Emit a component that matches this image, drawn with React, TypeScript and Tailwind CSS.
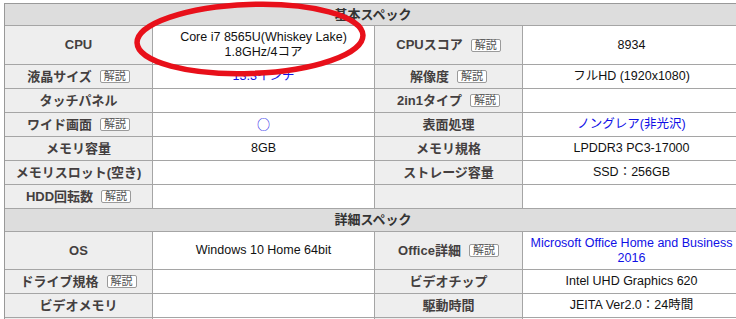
import { ReactNode } from "react";

type Cell = { label?: string; kaisetsu?: boolean; value?: ReactNode; blue?: boolean };
type Row = { h: string; left: Cell; right: Cell };

const basic: Row[] = [
    { h: "h-[39px]", left: { label: "CPU", value: <>Core i7 8565U(Whiskey Lake)<br />1.8GHz/4コア</> }, right: { label: "CPUスコア", kaisetsu: true, value: "8934" } },
    { h: "h-[24px]", left: { label: "液晶サイズ", kaisetsu: true, value: "13.3インチ", blue: true }, right: { label: "解像度", kaisetsu: true, value: "フルHD (1920x1080)" } },
    { h: "h-[24px]", left: { label: "タッチパネル" }, right: { label: "2in1タイプ", kaisetsu: true } },
    { h: "h-[24px]", left: { label: "ワイド画面", kaisetsu: true, value: <span className="font-['Noto_Sans_CJK_JP',sans-serif] text-[13px]">○</span>, blue: true }, right: { label: "表面処理", value: "ノングレア(非光沢)", blue: true } },
    { h: "h-[24px]", left: { label: "メモリ容量", value: "8GB" }, right: { label: "メモリ規格", value: "LPDDR3 PC3-17000" } },
    { h: "h-[24px]", left: { label: "メモリスロット(空き)" }, right: { label: "ストレージ容量", value: "SSD：256GB" } },
    { h: "h-[24px]", left: { label: "HDD回転数", kaisetsu: true }, right: {} },
];

const detail: Row[] = [
    { h: "h-[38px]", left: { label: "OS", value: "Windows 10 Home 64bit" }, right: { label: "Office詳細", kaisetsu: true, value: "Microsoft Office Home and Business 2016", blue: true } },
    { h: "h-[24px]", left: { label: "ドライブ規格", kaisetsu: true }, right: { label: "ビデオチップ", value: "Intel UHD Graphics 620" } },
    { h: "h-[24px]", left: { label: "ビデオメモリ" }, right: { label: "駆動時間", value: "JEITA Ver2.0：24時間" } },
    { h: "h-[24px]", left: {}, right: {} },
];

function Kaisetsu() {
    return (
        <span className="ml-[8px] inline-flex items-center justify-center h-[13px] px-[3px] border border-[#9a9a9a] rounded-[2px] bg-white text-[11px] leading-none font-normal text-[#555]">解説</span>
    )
}

function Label({ cell, w }: { cell: Cell; w: string }) {
    return (
        <div className={`${w} shrink-0 h-full border-r border-[#a5a5a5] bg-[#eeeeee] flex items-center justify-center font-bold text-[13px] text-[#443f3f]`}>
            {cell.label}
            {cell.kaisetsu && <Kaisetsu />}
        </div>
    )
}

function Value({ cell, w }: { cell: Cell; w: string }) {
    return (
        <div className={`${w} shrink-0 h-full border-r border-[#a5a5a5] bg-white flex items-center justify-center text-center px-[3px] text-[12.5px] leading-[15px] ${cell.blue ? "text-[#1010e6]" : "text-[#111]"}`}>
            <span>{cell.value}</span>
        </div>
    )
}

function SpecRow({ row }: { row: Row }) {
    return (
        <div className={`${row.h} flex border-b border-[#a5a5a5]`}>
            <Label cell={row.left} w="w-[148px]" />
            <Value cell={row.left} w="w-[222px]" />
            <Label cell={row.right} w="w-[148px]" />
            <Value cell={row.right} w="w-[218px]" />
        </div>
    )
}

function Heading({ title, h }: { title: string; h: string }) {
    return (
        <div className={`${h} flex items-center justify-center border-b border-[#a5a5a5] bg-[#dddddd] text-[13px] font-bold text-[#333]`}>
            {title}
        </div>
    )
}

export default function App() {
    return (
        <div className="relative w-[736px] h-[319px] overflow-hidden bg-white font-['Liberation_Sans','Noto_Sans_CJK_JP',sans-serif]">
            <div className="mt-[3px] ml-[4px] w-[737px] border-t border-l border-[#999]">
                <Heading title="基本スペック" h="h-[22px]" />
                {basic.map((row, i) => <SpecRow key={i} row={row} />)}
                <Heading title="詳細スペック" h="h-[23px]" />
                {detail.map((row, i) => <SpecRow key={i} row={row} />)}
            </div>
            {/* hand drawn red circle over the cpu */}
            <svg className="absolute left-[128px] top-0" width="246" height="80" viewBox="0 0 246 80">
                <ellipse cx="122" cy="39" rx="113" ry="34.5" fill="none" stroke="#e8101a" strokeWidth="5.5" transform="rotate(-2 122 39)" />
            </svg>
        </div>
    )
}
